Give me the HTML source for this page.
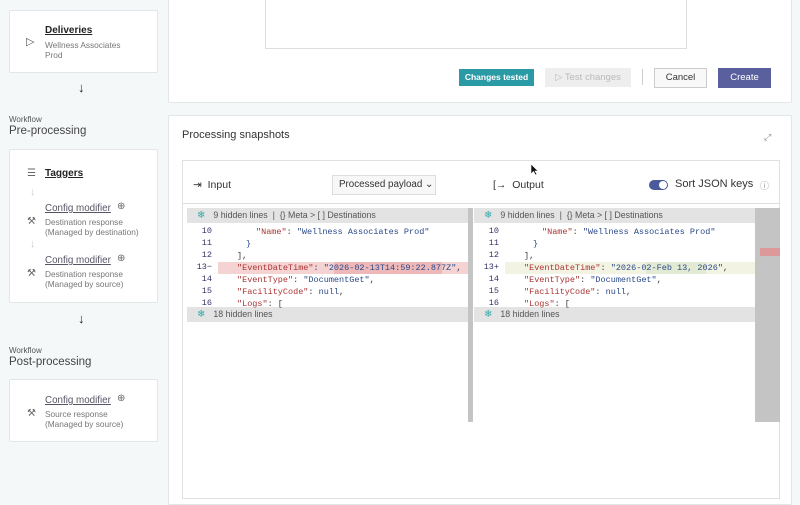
<!DOCTYPE html>
<html><head><meta charset="utf-8"><style>
*{box-sizing:border-box;margin:0;padding:0}
body{width:800px;height:501px;overflow:hidden;background:#f5f8f9;font-family:"Liberation Sans",sans-serif;color:#333;position:relative}
.abs{position:absolute}
.card{position:absolute;background:#fff;border:1px solid #e3e6e8;border-radius:2px}
.ttl{font-size:10px;color:#222;text-decoration:underline;font-weight:bold}
.sub{font-size:8.3px;color:#777;line-height:10px}
.lnk{font-size:9.8px;color:#556;text-decoration:underline}
.wf{font-size:8px;color:#555}
.h{font-size:11.5px;color:#444}
.arrow{font-size:13px;color:#222;left:78px}
.mono{font-family:"Liberation Mono",monospace;font-size:8.5px}
.row{position:absolute;height:12px;line-height:12px;white-space:pre}
.k{color:#a33}.s{color:#2a4a8a}.n{color:#2a4a8a}
.ln{position:absolute;width:26px;text-align:right;color:#336;font-family:"Liberation Mono",monospace;font-size:8.5px}
.hid{position:absolute;height:15px;background:#e3e3e3;font-size:8.8px;color:#555;line-height:15px}
.snow{color:#3aa;font-size:10px;margin:0 8px 0 10px}
</style></head><body>
<div class="card" style="left:9px;top:10px;width:149px;height:63px">
 <div class="abs" style="left:16px;top:24px;font-size:11px;color:#555">▷</div>
 <div class="abs ttl" style="left:35px;top:14px">Deliveries</div>
 <div class="abs sub" style="left:35px;top:29px">Wellness Associates<br>Prod</div>
</div>
<div class="abs arrow" style="top:80px">↓</div>
<div class="abs wf" style="left:9px;top:115px">Workflow</div>
<div class="abs h" style="left:9px;top:125px">Pre-processing</div>
<div class="card" style="left:9px;top:149px;width:149px;height:154px">
 <div class="abs" style="left:17px;top:18px;font-size:10px;color:#666">☰</div>
 <div class="abs ttl" style="left:35px;top:18px">Taggers</div>
 <div class="abs" style="left:20px;top:36px;color:#ccc;font-size:11px">↓</div>
 <div class="abs lnk" style="left:35px;top:53px">Config modifier</div><div class="abs" style="left:107px;top:51px;font-size:10px;color:#666">⊕</div>
 <div class="abs" style="left:17px;top:66px;font-size:10px;color:#666">⚒</div>
 <div class="abs sub" style="left:35px;top:67px">Destination response<br>(Managed by destination)</div>
 <div class="abs" style="left:20px;top:88px;color:#ccc;font-size:11px">↓</div>
 <div class="abs lnk" style="left:35px;top:105px">Config modifier</div><div class="abs" style="left:107px;top:103px;font-size:10px;color:#666">⊕</div>
 <div class="abs" style="left:17px;top:118px;font-size:10px;color:#666">⚒</div>
 <div class="abs sub" style="left:35px;top:119px">Destination response<br>(Managed by source)</div>
</div>
<div class="abs arrow" style="top:311px">↓</div>
<div class="abs wf" style="left:9px;top:346px">Workflow</div>
<div class="abs h" style="left:9px;top:356px">Post-processing</div>
<div class="card" style="left:9px;top:379px;width:149px;height:63px">
 <div class="abs lnk" style="left:35px;top:15px">Config modifier</div><div class="abs" style="left:107px;top:13px;font-size:10px;color:#666">⊕</div>
 <div class="abs" style="left:17px;top:28px;font-size:10px;color:#666">⚒</div>
 <div class="abs sub" style="left:35px;top:29px">Source response<br>(Managed by source)</div>
</div>
<div class="card" style="left:168px;top:-2px;width:624px;height:105px">
 <div class="abs" style="left:96px;top:0;width:422px;height:50px;border:1px solid #ddd;border-top:none;background:#fff"></div>
 <div class="abs" style="left:290px;top:70px;width:75px;height:17px;background:#2a9aa5;color:#fff;font-size:8.5px;font-weight:bold;line-height:17px;text-align:center">Changes tested</div>
 <div class="abs" style="left:376px;top:69px;width:86px;height:19px;background:#eee;color:#bbb;font-size:9.5px;line-height:19px;text-align:center">▷ Test changes</div>
 <div class="abs" style="left:473px;top:70px;width:1px;height:16px;background:#ccc"></div>
 <div class="abs" style="left:485px;top:69px;width:53px;height:20px;border:1px solid #ccc;background:#f8f8f8;font-size:9.5px;line-height:18px;text-align:center;color:#333">Cancel</div>
 <div class="abs" style="left:549px;top:69px;width:53px;height:20px;background:#5a5f9e;color:#fff;font-size:9.5px;line-height:20px;text-align:center">Create</div>
</div>
<div class="card" style="left:168px;top:115px;width:624px;height:390px">
 <div class="abs" style="left:13px;top:13px;font-size:11px;color:#333">Processing snapshots</div>
 <div class="abs" style="left:595px;top:16px;font-size:9px;color:#888">⤢</div>
</div>
<div class="abs" style="left:182px;top:160px;width:598px;height:339px;border:1px solid #e0e0e0;background:#fff">
 <div class="abs" style="left:10px;top:18px;font-size:10.5px;color:#333">⇥&nbsp; Input</div>
 <div class="abs" style="left:149px;top:14px;width:104px;height:20px;border:1px solid #ddd;background:#f7f7f7;font-size:9.8px;line-height:18px;padding-left:6px;color:#333">Processed payload ⌄</div>
 <div class="abs" style="left:310px;top:18px;font-size:10.5px;color:#333">[→&nbsp; Output</div>
 <div class="abs" style="left:466px;top:19px;width:19px;height:10px;border-radius:5px;background:#4a5a9a"><div class="abs" style="left:10px;top:1px;width:8px;height:8px;border-radius:4px;background:#fff"></div></div>
 <div class="abs" style="left:492px;top:17px;font-size:11px;color:#333">Sort JSON keys</div>
 <div class="abs" style="left:577px;top:18px;font-size:9px;color:#999">ⓘ</div>
 <div class="abs" style="left:0;top:42px;width:596px;height:1px;background:#ddd"></div>
</div>
<div class="abs" style="left:468px;top:208px;width:5px;height:214px;background:#c4c4c4"></div>
<div class="abs" style="left:755px;top:208px;width:25px;height:214px;background:#c4c4c4"></div>
<div class="abs" style="left:760px;top:248px;width:20px;height:8px;background:#d99"></div>
<div class="hid" style="left:187px;top:208px;width:281px"><span class="snow">❄</span>9 hidden lines &nbsp;| &nbsp;{} Meta &gt; [ ] Destinations</div>
<div class="hid" style="left:474px;top:208px;width:281px"><span class="snow">❄</span>9 hidden lines &nbsp;| &nbsp;{} Meta &gt; [ ] Destinations</div>
<div class="hid" style="left:187px;top:307px;width:281px"><span class="snow">❄</span>18 hidden lines</div>
<div class="hid" style="left:474px;top:307px;width:281px"><span class="snow">❄</span>18 hidden lines</div>
<div class="abs" style="left:218px;top:262px;width:250px;height:12px;background:#f5d3d3"></div>
<div class="abs" style="left:334px;top:262px;width:108px;height:12px;background:#eeb8b8"></div>
<div class="abs" style="left:505px;top:262px;width:250px;height:12px;background:#f3f3e3"></div>
<div class="abs" style="left:646px;top:262px;width:60px;height:12px;background:#e3ead3"></div>
<div class="ln" style="left:186px;top:226px">10</div><div class="ln" style="left:186px;top:238px">11</div><div class="ln" style="left:186px;top:250px">12</div><div class="ln" style="left:186px;top:262px">13−</div><div class="ln" style="left:186px;top:274px">14</div><div class="ln" style="left:186px;top:286px">15</div><div class="ln" style="left:186px;top:298px">16</div>
<div class="mono">
<div class="row" style="left:256px;top:226px"><span class="k">"Name"</span>: <span class="s">"Wellness Associates Prod"</span></div>
<div class="row" style="left:246px;top:238px"><span class="s">}</span></div>
<div class="row" style="left:237px;top:250px">],</div>
<div class="row" style="left:237px;top:262px"><span class="k">"EventDateTime"</span>: <span class="s">"2026-02-13T14:59:22.877Z"</span>,</div>
<div class="row" style="left:237px;top:274px"><span class="k">"EventType"</span>: <span class="s">"DocumentGet"</span>,</div>
<div class="row" style="left:237px;top:286px"><span class="k">"FacilityCode"</span>: <span class="n">null</span>,</div>
<div class="row" style="left:237px;top:298px"><span class="k">"Logs"</span>: [</div>
</div>
<div class="ln" style="left:473px;top:226px">10</div><div class="ln" style="left:473px;top:238px">11</div><div class="ln" style="left:473px;top:250px">12</div><div class="ln" style="left:473px;top:262px">13+</div><div class="ln" style="left:473px;top:274px">14</div><div class="ln" style="left:473px;top:286px">15</div><div class="ln" style="left:473px;top:298px">16</div>
<div class="mono">
<div class="row" style="left:542px;top:226px"><span class="k">"Name"</span>: <span class="s">"Wellness Associates Prod"</span></div>
<div class="row" style="left:533px;top:238px"><span class="s">}</span></div>
<div class="row" style="left:524px;top:250px">],</div>
<div class="row" style="left:524px;top:262px"><span class="k">"EventDateTime"</span>: <span class="s">"2026-02-Feb 13, 2026"</span>,</div>
<div class="row" style="left:524px;top:274px"><span class="k">"EventType"</span>: <span class="s">"DocumentGet"</span>,</div>
<div class="row" style="left:524px;top:286px"><span class="k">"FacilityCode"</span>: <span class="n">null</span>,</div>
<div class="row" style="left:524px;top:298px"><span class="k">"Logs"</span>: [</div>
</div>
<svg class="abs" style="left:530px;top:163px" width="9" height="13" viewBox="0 0 9 13"><path d="M1 1 L1 11 L3.5 8.5 L5.5 12 L7 11.3 L5 8 L8 8 Z" fill="#111" stroke="#fff" stroke-width="0.6"/></svg>
</body></html>
